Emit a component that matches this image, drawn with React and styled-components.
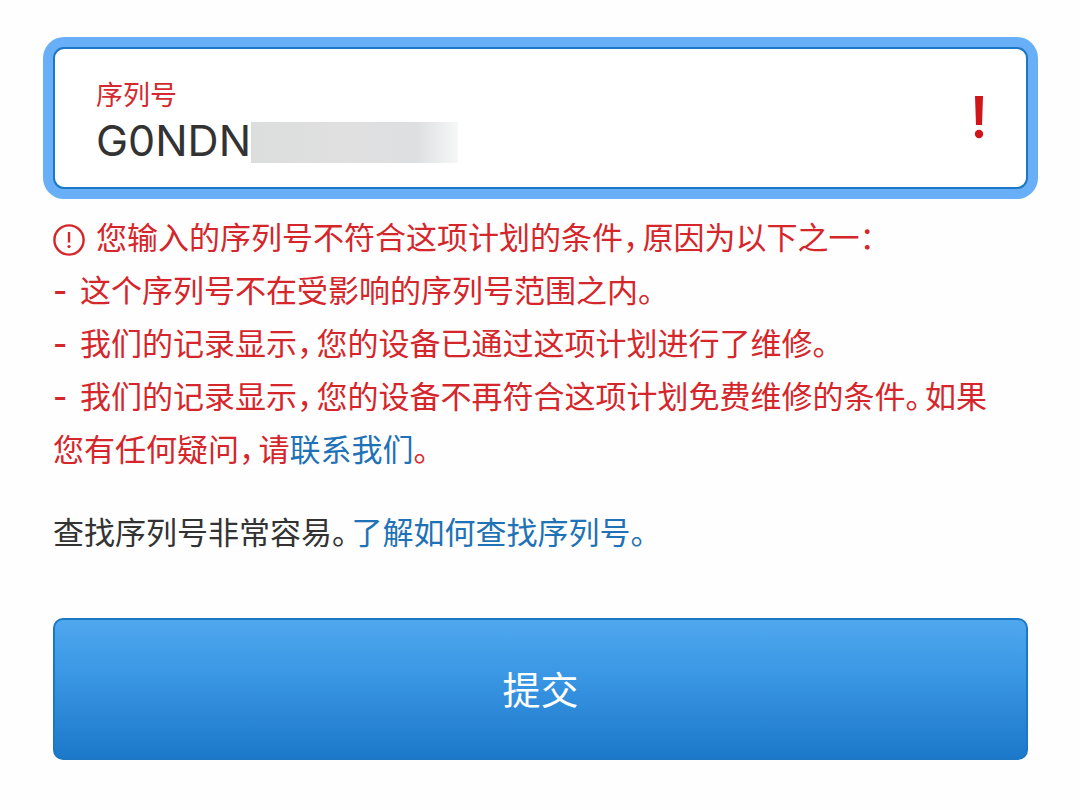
import React, { useState } from "react";
import styled, { createGlobalStyle } from "styled-components";

const GlobalStyle = createGlobalStyle`
  * {
    box-sizing: border-box;
  }

  body {
    margin: 0;
    background: #fefefe;
    color: #333;
    font-family: Inter, "Noto Sans CJK SC", sans-serif;
  }
`;

const Form = styled.form`
  padding: 47px 52px 47px 53px;
`;

const Field = styled.div`
  display: flex;
  align-items: center;
  justify-content: space-between;
  padding: 25px 42px 20px 41px;
  background: #fff;
  border: 2px solid #1c78c4;
  border-radius: 11px;
  box-shadow: 0 0 0 10px #68aff7;
`;

const FieldBody = styled.div`
  display: flex;
  flex-direction: column;
  flex: 1;
`;

const Label = styled.label`
  color: #d22a2e;
  font-family: "Noto Sans CJK SC", sans-serif;
  font-size: 27px;
  line-height: 40px;
`;

const ValueRow = styled.div`
  display: flex;
  align-items: center;
`;

const Input = styled.input`
  field-sizing: content;
  height: 53px;
  padding: 0;
  border: 0;
  outline: 0;
  background: none;
  color: #333;
  font-family: Inter, sans-serif;
  font-size: 43px;
  line-height: 53px;
`;

const Mask = styled.span`
  width: 207px;
  height: 41px;
  margin-top: 3px;
  background: linear-gradient(90deg, #dcdddd, #e0e0e1 45%, #dedfe0 80%, #f6f7f7);
`;

const Message = styled.div`
  padding-right: 24px;
  margin-top: 20px;
  color: #d5262b;
  font-family: "Noto Sans CJK SC", sans-serif;
  font-size: 31px;
  line-height: 53px;
  font-feature-settings: "halt";
`;

const Line = styled.p`
  margin: 0;
`;

const Reasons = styled.ul`
  margin: 0;
  padding: 0;
  list-style: none;
`;

const Dash = styled.span`
  display: inline-block;
  width: 27px;
  font-family: Inter, sans-serif;
  font-weight: 500;
  line-height: 1;
`;

// half-width punctuation in the middle of a line
const Punct = styled.span`
  margin-right: 4px;
`;

const AlertIcon = styled.svg`
  width: 32px;
  height: 32px;
  margin-right: 11px;
  vertical-align: -7px;
`;

const Hint = styled.p`
  margin: 30px 0 61px;
  font-family: "Noto Sans CJK SC", sans-serif;
  font-size: 31px;
  line-height: 53px;
  font-feature-settings: "halt";
`;

const TextLink = styled.a`
  color: #1f72b5;
  text-decoration: none;
`;

const Submit = styled.button`
  display: block;
  width: 100%;
  padding: 39px 40px 41px;
  border: 2px solid #1c78c4;
  border-radius: 10px;
  background: linear-gradient(#4fa7ee, #3a97e4 40%, #1c78c9);
  color: #fff;
  font-family: "Noto Sans CJK SC", sans-serif;
  font-size: 38px;
  line-height: 58px;
  cursor: pointer;
`;

const App = () => {
  const [serial, setSerial] = useState("G0NDN");

  return (
    <>
      <GlobalStyle />
      <Form onSubmit={(e) => e.preventDefault()}>
        <Field>
          <FieldBody>
            <Label htmlFor="serial">序列号</Label>
            <ValueRow>
              <Input
                id="serial"
                type="text"
                value={serial}
                onChange={(e) => setSerial(e.target.value)}
                aria-invalid="true"
                aria-describedby="serial-error"
              />
              <Mask />
            </ValueRow>
          </FieldBody>
          <svg width="10" height="52" viewBox="0 0 10 52" fill="#d0161b" aria-hidden="true">
            <path d="M1 1h8l-1 29H2z" />
            <circle cx="5" cy="39" r="4.2" />
          </svg>
        </Field>

        <Message id="serial-error" lang="zh-CN">
          <Line>
            <AlertIcon viewBox="0 0 32 32" fill="none" stroke="currentColor" aria-hidden="true">
              <circle cx="16" cy="16" r="14.6" strokeWidth="2.4" />
              <path d="M16 8v10.5" strokeWidth="2.4" />
              <circle cx="16" cy="22.5" r="1.6" fill="currentColor" stroke="none" />
            </AlertIcon>
            您输入的序列号不符合这项计划的条件<Punct>，</Punct>原因为以下之一：
          </Line>
          <Reasons>
            <li>
              <Dash>-</Dash>这个序列号不在受影响的序列号范围之内。
            </li>
            <li>
              <Dash>-</Dash>我们的记录显示<Punct>，</Punct>您的设备已通过这项计划进行了维修。
            </li>
            <li>
              <Dash>-</Dash>我们的记录显示<Punct>，</Punct>您的设备不再符合这项计划免费维修的条件
              <Punct>。</Punct>如果您有任何疑问<Punct>，</Punct>请
              <TextLink href="#contact">联系我们</TextLink>。
            </li>
          </Reasons>
        </Message>

        <Hint lang="zh-CN">
          查找序列号非常容易<Punct>。</Punct>
          <TextLink href="#find">了解如何查找序列号。</TextLink>
        </Hint>

        <Submit type="submit">提交</Submit>
      </Form>
    </>
  );
};

export default App;
